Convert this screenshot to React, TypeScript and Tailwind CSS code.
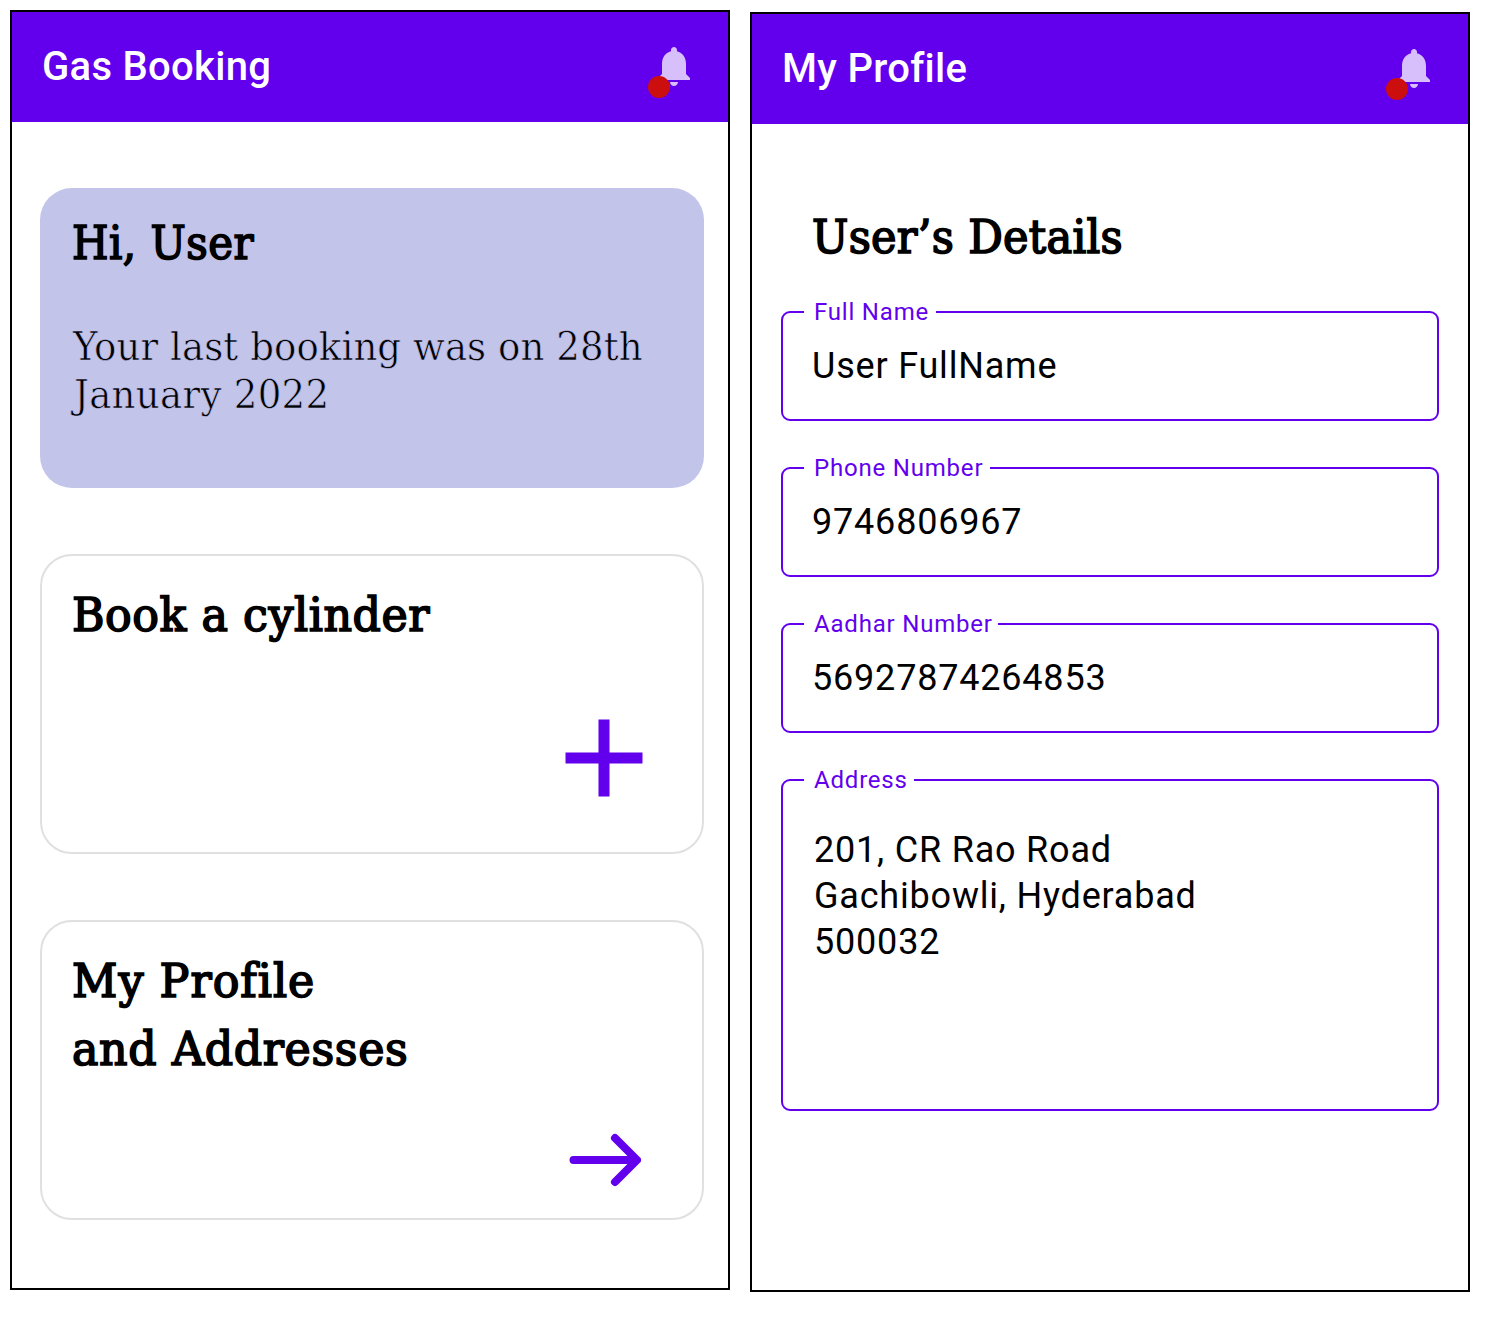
import type { ReactNode } from "react";

const slab =
  "font-['Roboto_Slab','DejaVu_Serif_Condensed','DejaVu_Serif',serif] [font-stretch:condensed] text-[46.5px] leading-[68px] whitespace-nowrap text-black [-webkit-text-stroke:1.6px_black]";

function Header({ title, dot }: { title: string; dot: string }) {
  return (
    <header className="flex h-[110px] items-center justify-between bg-[#6200ee] pr-[30px] pl-[30px]">
      <h1 className="text-[40px] leading-[54px] font-medium tracking-[0.3px] text-white">{title}</h1>
      <div className="relative mb-[2px] size-12">
        <svg viewBox="0 0 24 24" className="size-12 fill-[#d7bffb]">
          <path d="M12 22c1.1 0 2-.9 2-2h-4c0 1.1.9 2 2 2zm6-6v-5c0-3.07-1.64-5.64-4.5-6.32V4c0-.83-.67-1.5-1.5-1.5s-1.5.67-1.5 1.5v.68C7.63 5.36 6 7.92 6 11v5l-2 2v1h16v-1l-2-2z" />
        </svg>
        <span className={`absolute top-[34px] size-[22px] rounded-full bg-[#cc0e0e] ${dot}`} />
      </div>
    </header>
  );
}

function Card({ children }: { children: ReactNode }) {
  return (
    <section className="flex h-[300px] flex-col justify-between rounded-[32px] border-2 border-[#e0e0e0] px-[30px] pt-[25px]">
      {children}
    </section>
  );
}

function Field({ label, notch, height, children }: { label: string; notch: string; height: string; children: ReactNode }) {
  return (
    <div className={`relative rounded-[9px] border-2 border-[#6200ee] pl-[29px] text-[36px] leading-[46px] tracking-[0.8px] text-black ${height}`}>
      <span className={`absolute -top-[15px] left-[21px] bg-white pl-[10px] text-[24px] leading-[28px] tracking-[0.8px] whitespace-nowrap text-[#6200ee] ${notch}`}>
        {label}
      </span>
      {children}
    </div>
  );
}

export default function App() {
  return (
    <main className="flex h-[1326px] w-[1492px] items-start gap-5 bg-white pt-[10px] pl-[10px] font-['Roboto',sans-serif]">
      <div className="h-[1280px] w-[720px] border-2 border-black">
        <Header title="Gas Booking" dot="-left-[2px]" />
        <div className="flex flex-col gap-[66px] pt-[66px] pr-[24px] pl-[28px]">
          <section className="h-[300px] rounded-[32px] bg-[#c2c4ea] px-8 pt-[21px]">
            <h2 className={`tracking-[0.5px] ${slab}`}>Hi, User</h2>
            <p className="mt-[45px] font-['Roboto_Slab','DejaVu_Serif_Condensed','DejaVu_Serif',serif] text-[40px] leading-[48px] font-light whitespace-nowrap text-black [font-stretch:condensed] [-webkit-text-stroke:0.6px_#c2c4ea]">
              <span className="block origin-left scale-x-[1.03] pl-px tracking-[0.1px]">Your last booking was on 28th</span>
              <span className="block origin-left scale-x-[1.03] pl-[2px] tracking-[0.3px]">January 2022</span>
            </p>
          </section>
          <Card>
            <h2 className={`origin-left scale-x-[1.06] tracking-[0.5px] ${slab}`}>Book a cylinder</h2>
            <svg viewBox="0 0 78 78" className="mr-[29px] mb-[55px] size-[78px] self-end fill-[#6200ee]">
              <path d="M33.5 0.5h11v33h33v11h-33v33h-11v-33h-33v-11h33z" />
            </svg>
          </Card>
          <Card>
            <h2 className={`origin-left scale-x-[1.06] ${slab}`}>
              <span className="block tracking-[0.95px]">My Profile</span>
              <span className="block tracking-[0.6px]">and Addresses</span>
            </h2>
            <svg viewBox="0 0 72 54" className="mr-[31px] mb-[31px] h-[54px] w-[72px] self-end fill-none stroke-[#6200ee] stroke-8" strokeLinecap="round" strokeLinejoin="round">
              <path d="M4.5 27H67M46 5l22 22-22 22" />
            </svg>
          </Card>
        </div>
      </div>

      <div className="mt-[2px] h-[1280px] w-[720px] border-2 border-black">
        <Header title="My Profile" dot="-left-[4px]" />
        <div className="flex flex-col px-[29px] pt-[79px]">
          <h2 className={`ml-[31px] origin-left scale-x-[1.03] tracking-[0.3px] ${slab}`}>User’s Details</h2>
          <div className="mt-10 flex flex-col gap-[46px]">
            <Field label="Full Name" notch="w-[132px]" height="h-[110px] pt-[30px]">User FullName</Field>
            <Field label="Phone Number" notch="w-[186px]" height="h-[110px] pt-[30px]">9746806967</Field>
            <Field label="Aadhar Number" notch="w-[194px]" height="h-[110px] pt-[30px]">56927874264853</Field>
            <Field label="Address" notch="w-[110px]" height="h-[332px] pt-[46px]">
              <address className="pl-[2px] not-italic">
                201, CR Rao Road
                <br />
                Gachibowli, Hyderabad
                <br />
                500032
              </address>
            </Field>
          </div>
        </div>
      </div>
    </main>
  );
}
